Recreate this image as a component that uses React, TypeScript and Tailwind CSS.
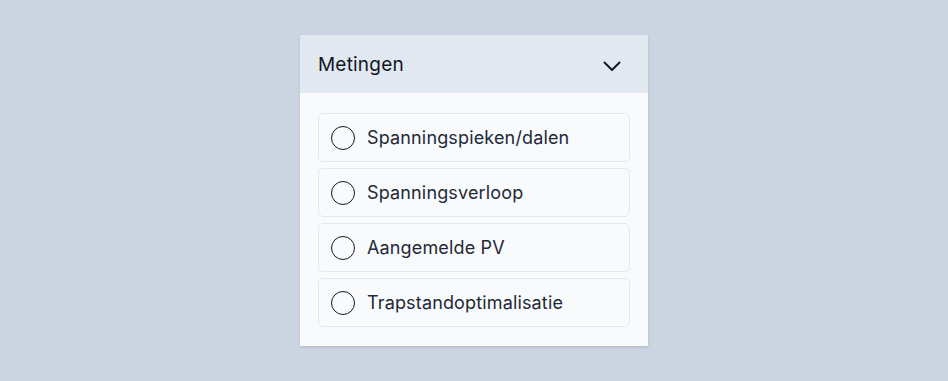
import React from "react";

const items = ["Spanningspieken/dalen", "Spanningsverloop", "Aangemelde PV", "Trapstandoptimalisatie"];

export default function App() {
  return (
    <div className="flex h-[381px] w-full items-center justify-center bg-[#cbd5e1]" style={{ fontFamily: "Inter, 'Noto Sans', sans-serif" }}>
      <div className="w-[348px] overflow-hidden bg-[#f8fafc] shadow-sm">
        <div className="flex h-[58px] items-center justify-between bg-[#e2e8f0] pl-[18px] pr-[24px] pt-[3px]">
          <span className="text-[19px] tracking-[0.2px] text-[#111827]">Metingen</span>
          <svg width="24" height="24" viewBox="0 0 24 24" fill="none" stroke="#111827" strokeWidth="2" strokeLinecap="round" strokeLinejoin="round">
            <path d="M4.5 8.5l7.5 7.5 7.5-7.5" />
          </svg>
        </div>
        <div className="flex flex-col gap-[6px] px-[18px] pb-[19px] pt-[20px]">
          {items.map((t) => (
            <div key={t} className="flex h-[49px] items-center gap-[12px] rounded-[5px] border border-[#e2e8f0] bg-[#f8fafc] pl-[12px]">
              <span className="h-[24px] w-[24px] rounded-full border-[1.5px] border-[#111827]" />
              <span className="text-[18px] tracking-[0.15px] text-[#1f2937]">{t}</span>
            </div>
          ))}
        </div>
      </div>
    </div>
  );
}
